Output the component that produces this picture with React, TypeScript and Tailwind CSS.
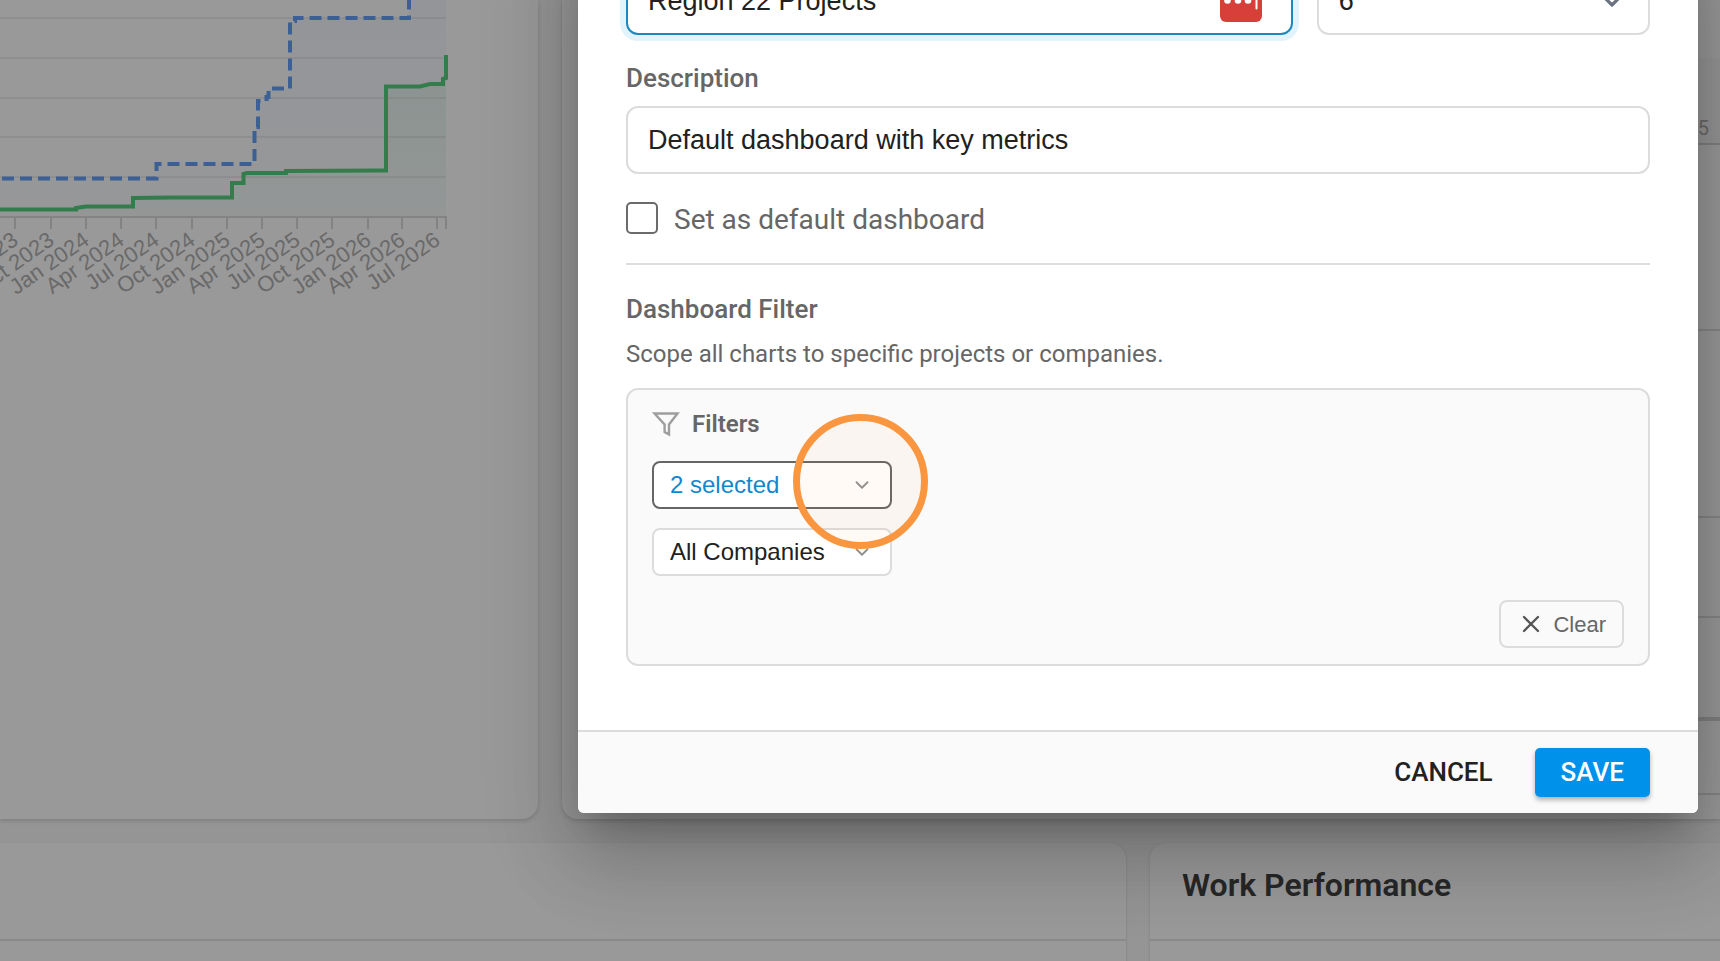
import { useState } from 'react';
import { ChevronDown, X } from 'lucide-react';

const ticks = [
  { x: 15, label: 'Jul 2023' },
  { x: 51, label: 'Oct 2023' },
  { x: 86, label: 'Jan 2024' },
  { x: 121, label: 'Apr 2024' },
  { x: 156, label: 'Jul 2024' },
  { x: 192, label: 'Oct 2024' },
  { x: 227, label: 'Jan 2025' },
  { x: 262, label: 'Apr 2025' },
  { x: 297, label: 'Jul 2025' },
  { x: 332, label: 'Oct 2025' },
  { x: 368, label: 'Jan 2026' },
  { x: 402, label: 'Apr 2026' },
  { x: 437, label: 'Jul 2026' },
];

const gridLines = [18, 58, 98, 137, 177];

const plannedLine =
  'M-16 178.5H156.5V164H254.5V127H258V101H266.5V97H268.5V88.5H290V21H295V18H409V-20';
const actualLine =
  'M-16 209.5H76V208L86 206.5H133V198L172 197.5H232V183H243.5V174L247 173H286V171L380 170.5H386V86.5H420L430 84H443V79L446 78V55';

const ProgressChart = () => (
  <svg width="460" height="310" viewBox="0 0 460 310" className="block">
    <defs>
      <linearGradient id="plannedFill" x1="0" y1="0" x2="0" y2="1">
        <stop offset="0" stopColor="#5b8ff0" stopOpacity="0.06" />
        <stop offset="1" stopColor="#5b8ff0" stopOpacity="0.02" />
      </linearGradient>
      <linearGradient id="actualFill" x1="0" y1="0" x2="0" y2="1">
        <stop offset="0" stopColor="#4fc978" stopOpacity="0.1" />
        <stop offset="1" stopColor="#4fc978" stopOpacity="0.03" />
      </linearGradient>
    </defs>
    {gridLines.map((y) => (
      <line key={y} x1="0" x2="446" y1={y} y2={y} stroke="#efefef" strokeWidth="2" />
    ))}
    <path d={`${plannedLine}H446V217H-16Z`} fill="url(#plannedFill)" />
    <path d={`${actualLine}V217H-16Z`} fill="url(#actualFill)" />
    <line x1="0" x2="447" y1="217" y2="217" stroke="#dadada" strokeWidth="2" />
    {ticks.map((t) => (
      <line key={t.x} x1={t.x} x2={t.x} y1="217" y2="229" stroke="#dadada" strokeWidth="2" />
    ))}
    <line x1="446" x2="446" y1="217" y2="229" stroke="#dadada" strokeWidth="2" />
    <path d={plannedLine} fill="none" stroke="#659ff8" strokeWidth="4" strokeDasharray="12 6" />
    <path d={actualLine} fill="none" stroke="#55cf7d" strokeWidth="4" />
    {ticks.map((t) => (
      <text
        key={t.label}
        transform={`translate(${t.x} 237) rotate(-35)`}
        dy="0.35em"
        textAnchor="end"
        fontSize="22"
        fill="#b0b0b0"
        fontFamily="'Liberation Sans', Arial, sans-serif"
      >
        {t.label}
      </text>
    ))}
  </svg>
);

const DashboardPage = () => (
  <div className="flex h-full flex-col gap-6 bg-[#f8f8f8]">
    <div className="grid h-[819px] shrink-0 grid-cols-[538fr_1158fr] gap-6">
      <section className="overflow-hidden rounded-br-2xl bg-white shadow-[0_2px_4px_rgba(0,0,0,0.15)]">
        <ProgressChart />
      </section>
      <section className="flex flex-col rounded-bl-2xl bg-white pl-8 shadow-[0_2px_4px_rgba(0,0,0,0.15)]">
        <div className="h-[58px]" />
        <div className="flex h-[87px] items-end justify-end border-b-2 border-[#d8d8d8] bg-[#fafafa] pr-[11px] pb-[3px] text-[20px] leading-[24px] text-[#b0b0b0]">
          5
        </div>
        <div className="h-[186px] border-b-2 border-[#e0e0e0]" />
        <div className="h-[187px] border-b-2 border-[#e0e0e0]" />
        <div className="h-[100px] border-b-2 border-[#e0e0e0]" />
        <div className="h-[103px] border-b-4 border-[#d8d8d8]" />
        <div className="h-[74px] border-b-2 border-[#e0e0e0]" />
      </section>
    </div>
    <div className="grid grow grid-cols-[1126fr_570fr] gap-6">
      <section className="rounded-tr-2xl bg-white shadow-[0_1px_3px_rgba(0,0,0,0.15)]">
        <div className="h-[98px] border-b-2 border-[#e6e6e6]" />
      </section>
      <section className="rounded-tl-2xl bg-white shadow-[0_1px_3px_rgba(0,0,0,0.15)]">
        <div className="flex h-[98px] items-center border-b-2 border-[#e6e6e6] px-8 pb-3">
          <h2 className="text-[32px] leading-10 font-semibold text-[#424242]">Work Performance</h2>
        </div>
      </section>
    </div>
  </div>
);

const PasswordBadge = () => (
  <svg width="42" height="42" viewBox="0 0 42 42">
    <rect width="42" height="42" rx="6" fill="#d93f3a" />
    <circle cx="7.5" cy="20.5" r="3.3" fill="#fff" />
    <circle cx="18" cy="20.5" r="3.3" fill="#fff" />
    <circle cx="28" cy="20.5" r="3.3" fill="#fff" />
    <rect x="35.5" y="11" width="2" height="18.5" rx="1" fill="#fff" />
  </svg>
);

const FunnelIcon = () => (
  <svg width="28" height="26" viewBox="0 0 28 26" fill="none" stroke="#9e9e9e" strokeWidth="2.4">
    <path d="M2.5 2.5H25.5L17 13.5V23.4L12.6 21V13.5Z" />
  </svg>
);

const App = () => {
  const [name, setName] = useState('Region 22 Projects');
  const [description, setDescription] = useState('Default dashboard with key metrics');
  const [isDefault, setIsDefault] = useState(false);

  return (
    <div className="relative h-screen overflow-hidden font-['Roboto',sans-serif]">
      <DashboardPage />

      <div className="absolute inset-0 flex items-end justify-end bg-black/40 pr-[22px] pb-[148px]">
        <div
          role="dialog"
          aria-label="Edit dashboard"
          className="w-[1120px] shrink-0 rounded-md bg-white shadow-[0_22px_30px_-14px_rgba(0,0,0,0.2),0_48px_76px_6px_rgba(0,0,0,0.14),0_18px_92px_16px_rgba(0,0,0,0.12)]"
        >
          <div className="px-12 pt-12 pb-16 text-[#666666]">
            <div className="grid grid-cols-[2fr_1fr] gap-6">
              <div className="relative">
                <input
                  type="text"
                  aria-label="Dashboard name"
                  value={name}
                  onChange={(e) => setName(e.target.value)}
                  className="h-[68px] w-full rounded-xl border-2 border-[#1e88bd] bg-white px-5 font-['Liberation_Sans',sans-serif] text-[27px] text-[#212121] shadow-[0_0_0_6px_#e1f3fb] outline-none"
                />
                <div className="absolute inset-y-0 right-[31px] flex items-center">
                  <PasswordBadge />
                </div>
              </div>
              <div className="relative">
                <select
                  aria-label="Columns"
                  defaultValue="6"
                  className="h-[68px] w-full appearance-none rounded-xl border-2 border-[#dcdcdc] bg-white px-5 font-['Liberation_Sans',sans-serif] text-[27px] text-[#212121]"
                >
                  <option>6</option>
                </select>
                <div className="pointer-events-none absolute inset-y-0 right-[22px] flex items-center">
                  <ChevronDown size={32} strokeWidth={2.4} className="text-[#6b7280]" />
                </div>
              </div>
            </div>

            <label htmlFor="description" className="mt-[23px] mb-2 block text-[26px] leading-10 font-medium">
              Description
            </label>
            <input
              id="description"
              type="text"
              value={description}
              onChange={(e) => setDescription(e.target.value)}
              className="block h-[68px] w-full rounded-xl border-2 border-[#dcdcdc] bg-white px-5 font-['Liberation_Sans',sans-serif] text-[27px] text-[#212121] outline-none"
            />

            <label className="mt-6 flex h-10 items-center gap-4 text-[28px]">
              <input
                type="checkbox"
                checked={isDefault}
                onChange={(e) => setIsDefault(e.target.checked)}
                className="size-8 appearance-none rounded-[5px] border-2 border-[#6b6b6b] bg-white checked:bg-[#0091ea]"
              />
              <span className="pt-1">Set as default dashboard</span>
            </label>

            <hr className="mt-[25px] border-t-2 border-[#dedede]" />

            <h3 className="mt-6 text-[26px] leading-10 font-medium">Dashboard Filter</h3>
            <p className="mt-[5px] text-[24px] leading-10">Scope all charts to specific projects or companies.</p>

            <div className="mt-[14px] rounded-xl border-2 border-[#dcdcdc] bg-[#fafafa] px-6 py-4">
              <div className="flex flex-col items-start gap-[19px]">
                <div className="flex h-9 items-center gap-3">
                  <FunnelIcon />
                  <span className="text-[24px] font-semibold">Filters</span>
                </div>
                <div className="relative w-60">
                  <select
                    aria-label="Projects"
                    className="block h-12 w-full appearance-none rounded-lg border-2 border-[#666666] bg-white px-4 font-['Liberation_Sans',sans-serif] text-[24px] text-[#1088cb]"
                  >
                    <option>2 selected</option>
                  </select>
                  <div className="pointer-events-none absolute inset-y-0 right-[19px] flex items-center">
                    <ChevronDown size={22} className="text-[#8f8f8f]" />
                  </div>
                  {/* click marker over the arrow */}
                  <div className="pointer-events-none absolute -top-[47px] -right-9 z-10 size-[135px] rounded-full border-[7px] border-[#fa963f] bg-[#fa963f]/5" />
                </div>
                <div className="relative w-60">
                  <select
                    aria-label="Companies"
                    className="block h-12 w-full appearance-none rounded-lg border-2 border-[#dcdcdc] bg-white px-4 font-['Liberation_Sans',sans-serif] text-[24px] text-[#212121]"
                  >
                    <option>All Companies</option>
                  </select>
                  <div className="pointer-events-none absolute inset-y-0 right-[19px] flex items-center">
                    <ChevronDown size={22} className="text-[#8f8f8f]" />
                  </div>
                </div>
              </div>
              <div className="mt-6 flex justify-end">
                <button
                  type="button"
                  className="flex h-12 items-center gap-2 rounded-lg border-2 border-[#dcdcdc] px-4 font-['Liberation_Sans',sans-serif] text-[22px]"
                >
                  <X size={28} className="text-[#555555]" />
                  Clear
                </button>
              </div>
            </div>
          </div>

          <div className="flex justify-end gap-[18px] rounded-b-md border-t-2 border-[#dcdcdc] bg-[#fafafa] px-12 py-4 text-[26px] font-medium">
            <button type="button" className="h-[49px] px-6 text-[#212121]">
              CANCEL
            </button>
            <button
              type="button"
              className="h-[49px] rounded-[5px] bg-[#0091ea] px-[26px] text-white shadow-[0_3px_5px_rgba(0,0,0,0.3)]"
            >
              SAVE
            </button>
          </div>
        </div>
      </div>
    </div>
  );
};

export default App;
